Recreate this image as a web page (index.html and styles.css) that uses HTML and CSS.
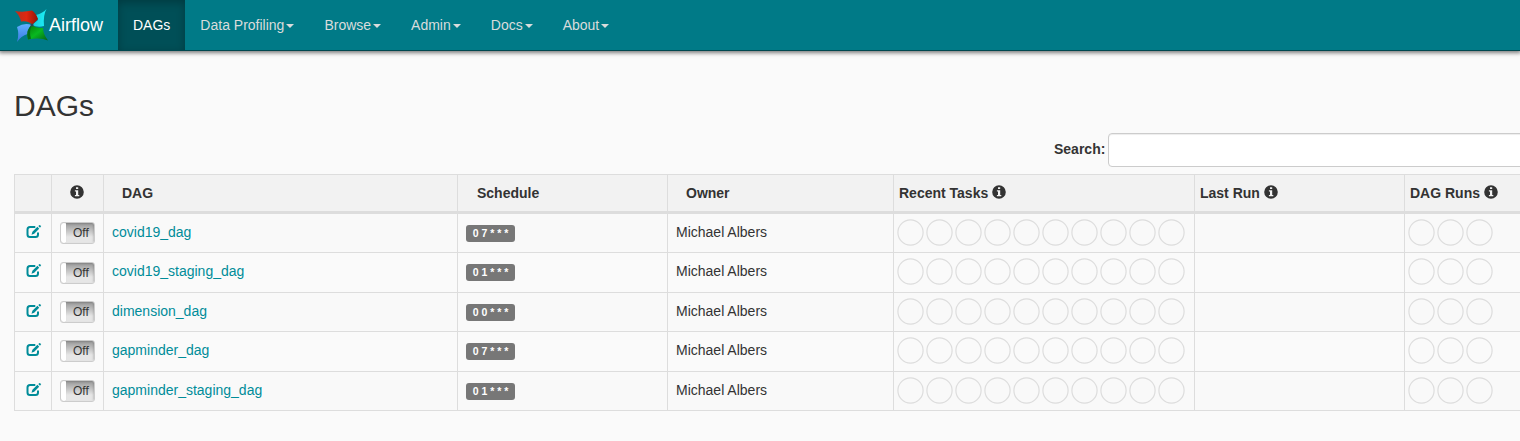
FILE: index.html
```html
<!DOCTYPE html>
<html lang="en">
<head>
<meta charset="utf-8">
<title>Airflow - DAGs</title>
<link rel="stylesheet" href="styles.css">
</head>
<body>
<svg class="defs" width="0" height="0" aria-hidden="true">
  <symbol id="info" viewBox="0 0 14 14">
    <path fill="currentColor" fill-rule="evenodd" d="M7 .2a6.8 6.8 0 1 0 0 13.6A6.8 6.8 0 1 0 7 .2ZM6 2.2h2.2v1.9H6ZM4.9 5.3h3.3v4.6h1.1v1.3H4.9V9.9h1.1V6.6H4.9Z"/>
  </symbol>
  <symbol id="edit" viewBox="0 0 16 15">
    <path fill="none" stroke="currentColor" stroke-width="2" d="M9.3 3H4Q1.500 3 1.500 5.500V10.500Q1.500 13 4 13H9.500Q12 13 12 10.500V8.500"/>
    <path fill="currentColor" d="M5.500 10.800 6.400 7.700 11.400 2.800 13.200 4.700 8.200 9.700ZM12.300 1.900 13.500.900 15.200 2.100 14 3.700Z"/>
  </symbol>
</svg>
<nav class="navbar">
  <a class="brand">
    <svg class="logo" viewBox="0 0 34 36" width="34" height="36">
      <defs>
        <linearGradient id="red"><stop offset="0" stop-color="#b83020"/><stop offset=".5" stop-color="#e02810"/><stop offset="1" stop-color="#901408"/></linearGradient>
        <linearGradient id="cyan" x1="1" x2="0"><stop offset="0" stop-color="#18f0f8"/><stop offset="1" stop-color="#20c8d8"/></linearGradient>
        <linearGradient id="green" x2="1" y2="1"><stop offset="0" stop-color="#067808"/><stop offset=".5" stop-color="#08b820"/><stop offset="1" stop-color="#066018"/></linearGradient>
        <linearGradient id="blue" x2="0" y2="1"><stop offset="0" stop-color="#60b0ff"/><stop offset="1" stop-color="#3878e0"/></linearGradient>
      </defs>
      <path fill="url(#cyan)" d="M31.500 1Q28 7 29 18Q23 20 17 17L23 12 21 7Q28 5 31.500 1Z"/>
      <path fill="url(#red)" d="M0 3Q8 4.500 17 2.500Q21 5 23 11Q20 14 17 17Q14 12.500 6 13.500Q5 8 0 3Z"/>
      <path fill="url(#blue)" d="M17 17Q13 19 12.500 26Q6 28 2 34Q4.500 26 2 19Q9 14.500 17 17Z"/>
      <path fill="url(#green)" d="M17 17Q21 20.500 28 20Q28 26 33 32.500Q25 29 13 31.500Q10.500 24 17 17Z"/>
      <path fill="#076b18" d="M17 17Q10.500 21 13 31.500L16 30.800Q13.500 23 17 17Z"/>
      <circle cx="17" cy="17" r="1.600" fill="#284858"/>
    </svg>
    <span>Airflow</span>
  </a>
  <a class="nav-link active">DAGs</a>
  <a class="nav-link">Data Profiling<i class="caret"></i></a>
  <a class="nav-link">Browse<i class="caret"></i></a>
  <a class="nav-link">Admin<i class="caret"></i></a>
  <a class="nav-link">Docs<i class="caret"></i></a>
  <a class="nav-link">About<i class="caret"></i></a>
</nav>
<main class="content">
  <h2>DAGs</h2>
  <label class="search">Search:<input type="text" aria-label="Search"></label>
  <table class="dags">
    <colgroup><col class="c-edit"><col class="c-toggle"><col class="c-dag"><col class="c-schedule"><col class="c-owner"><col class="c-tasks"><col class="c-last"><col class="c-runs"></colgroup>
    <thead>
      <tr>
        <th></th>
        <th class="center"><svg class="info"><use href="#info"/></svg></th>
        <th class="indent">DAG</th>
        <th class="indent schedule">Schedule</th>
        <th class="indent">Owner</th>
        <th>Recent Tasks <svg class="info"><use href="#info"/></svg></th>
        <th>Last Run <svg class="info"><use href="#info"/></svg></th>
        <th>DAG Runs <svg class="info"><use href="#info"/></svg></th>
      </tr>
    </thead>
    <tbody id="rows"></tbody>
  </table>
</main>
<script src="dags.js"></script>
</body>
</html>
```
FILE: styles.css
```css
* { box-sizing: border-box; }
body {
  margin: 0;
  background: #fafafa;
  color: #333;
  font: 14px/20px "Liberation Sans", Arial, sans-serif;
  overflow: hidden;
}
.defs { position: absolute; }
.navbar {
  display: flex;
  height: 51px;
  background: #007a87;
  border-bottom: 1px solid #00474f;
  box-shadow: 0 1px 4px 1px rgba(0, 0, 0, .5);
}
.brand {
  display: flex;
  width: 118px;
  padding: 8px 0 0 15px;
  color: #fff;
  font-size: 18px;
}
.brand span { padding-top: 7px; }
.logo { flex: none; }
.nav-link {
  display: flex;
  padding: 15px 15px 0;
  color: #d9dcdc;
}
.nav-link.active {
  color: #fff;
  background: #004f57;
  box-shadow: inset 0 3px 9px rgba(0, 0, 0, .25);
}
.caret {
  margin: 9px 0 0 2px;
  height: 4px;
  border: 4px solid transparent;
  border-top-color: currentColor;
  border-bottom: 0;
}
.content {
  width: 1572px;
  padding: 38px 0 0 14px;
}
h2 {
  margin: 0 0 11px;
  font-size: 30px;
  line-height: 33px;
  font-weight: 400;
}
.search {
  display: flex;
  width: 532px;
  margin: 0 0 7px 1040px;
  line-height: 33px;
  font-weight: 700;
}
.search input {
  flex: 1;
  height: 34px;
  margin-left: 3px;
  border: 1px solid #ccc;
  border-radius: 4px;
  background: #fff;
  box-shadow: inset 0 1px 1px rgba(0, 0, 0, .075);
}
.dags {
  width: 1558px;
  table-layout: fixed;
  border-collapse: separate;
  border-spacing: 0;
}
.c-edit { width: 37px; }
.c-toggle { width: 52px; }
.c-dag { width: 354px; }
.c-schedule { width: 210px; }
.c-owner { width: 226px; }
.c-tasks { width: 301px; }
.c-last { width: 210px; }
.dags th {
  height: 40px;
  padding: 8px 5px;
  vertical-align: top;
  text-align: left;
  background: #f2f2f2;
  border: solid #ddd;
  border-width: 1px 0 3px 1px;
}
.dags th.center { text-align: center; padding: 8px 1px 8px 0; }
.dags th.indent { padding-left: 18px; }
.dags th.schedule { padding-left: 19px; }
.info { width: 14px; height: 14px; vertical-align: -1px; }
.dags td {
  height: 39px;
  padding: 8px 8px 0;
  vertical-align: top;
  border: solid #ddd;
  border-width: 0 0 1px 1px;
}
.dags tbody tr:nth-child(odd) td { background: #f9f9f9; }
.dags tbody tr:nth-child(even) td { height: 40px; }
.dags tbody tr:nth-child(2) .toggle { margin-top: 1px; }
.dags a, .edit { color: #008c99; }
.dags td.edit-cell { padding: 10px 0 0 11px; line-height: 0; }
.edit { width: 16px; height: 15px; }
.toggle {
  display: flex;
  width: 35px;
  height: 22px;
  border: 1px solid #ccc;
  border-radius: 3px;
  overflow: hidden;
  font-size: 12px;
  line-height: 20px;
}
.toggle i {
  width: 6px;
  background: #fff;
  border-radius: 3px;
  box-shadow: 0 0 1px #999;
}
.toggle span {
  flex: 1;
  margin-left: -1px;
  padding-left: 7px;
  background: linear-gradient(#999, #e6e6e6 70%);
  box-shadow: inset -1px 1px 2px rgba(0, 0, 0, .15);
}
.badge {
  display: block;
  width: 49px;
  height: 17px;
  margin-top: 3px;
  border-radius: 3px;
  background: #777;
  color: #fff;
  font-size: 10.5px;
  line-height: 17px;
  font-weight: 700;
  text-align: center;
}
.dags td.circles { padding: 4px 0 0 2px; line-height: 0; }
.circles svg { width: 29px; height: 29px; }
.circles circle { fill: none; stroke: #ddd; stroke-width: 1.2; }
```
FILE: dags.js
```js
const dags = [
  ["covid19_dag", "0 7 * * *"],
  ["covid19_staging_dag", "0 1 * * *"],
  ["dimension_dag", "0 0 * * *"],
  ["gapminder_dag", "0 7 * * *"],
  ["gapminder_staging_dag", "0 1 * * *"],
];
const circles = n => '<svg viewBox="0 0 29 29"><circle cx="14.5" cy="14.5" r="12.6"/></svg>'.repeat(n);
document.getElementById("rows").innerHTML = dags.map(([name, schedule]) => `<tr>
  <td class="edit-cell"><svg class="edit"><use href="#edit"/></svg></td>
  <td><div class="toggle"><i></i><span>Off</span></div></td>
  <td><a>${name}</a></td>
  <td><span class="badge">${schedule}</span></td>
  <td>Michael Albers</td>
  <td class="circles">${circles(10)}</td>
  <td></td>
  <td class="circles">${circles(3)}</td>
</tr>`).join("");
```
